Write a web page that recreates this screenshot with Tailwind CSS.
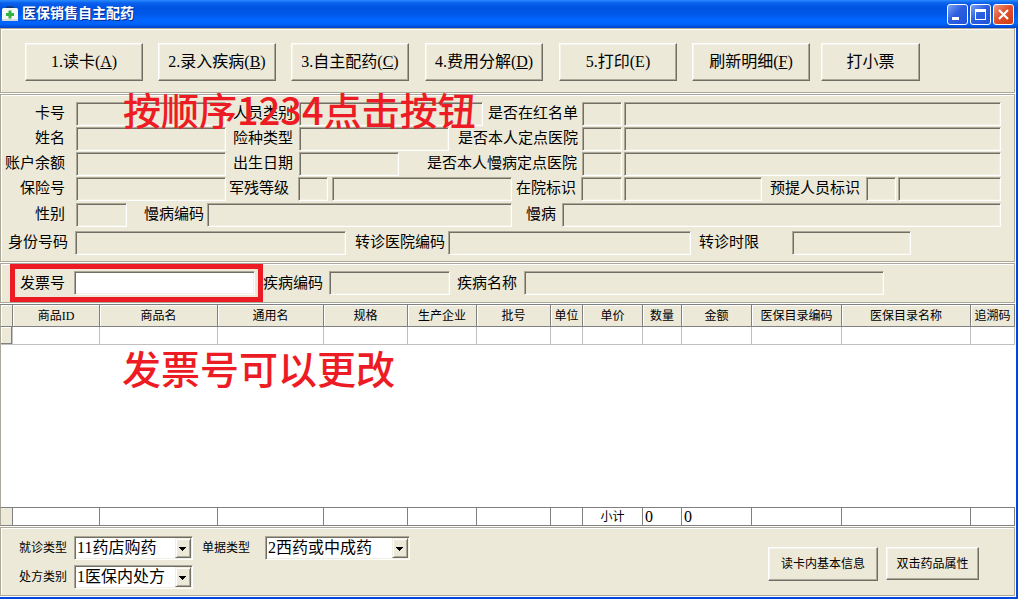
<!DOCTYPE html>
<html lang="zh-CN">
<head>
  <meta charset="UTF-8" />
  <meta name="viewport" content="width=device-width, initial-scale=1.0"/>
  <title>医保销售自主配药</title>
  <script src="https://cdn.jsdelivr.net/npm/@tailwindcss/browser@4"></script>
</head>
<body class="h-screen min-h-[480px] flex flex-col overflow-hidden bg-[#0046e0] text-black font-['Liberation_Serif','Noto_Sans_CJK_SC',serif]">

  <!-- Title bar -->
  <header class="h-7 shrink-0 flex items-center pl-[2px] pr-1 bg-[linear-gradient(#2a8cff_0px,#0a60ee_3px,#0053e1_8px,#0058ea_14px,#0066ff_20px,#0064fb_24px,#0040c8_28px)]">
    <svg class="w-4 h-4" viewBox="0 0 16 16">
      <path d="M5 2.500V1h6v1.500" fill="none" stroke="#222" stroke-width="1"/>
      <rect x="0" y="2" width="16" height="13" rx="1.500" fill="#f4f6f4"/>
      <rect x="0" y="13" width="16" height="2" rx="1" fill="#d5d9dc"/>
      <path d="M6.500 4.500h3V7h2.500v3H9.500v2.500h-3V10H4V7h2.500z" fill="#2fb344"/>
    </svg>
    <h1 class="ml-1 text-sm font-bold text-white [text-shadow:1px_1px_0_#0b2a8c]">医保销售自主配药</h1>
    <div class="ml-auto flex gap-[2px] [&>button]:w-[21px] [&>button]:h-[21px] [&>button]:border [&>button]:border-white [&>button]:rounded-[3px]">
      <button aria-label="最小化" class="bg-[linear-gradient(135deg,#7aa2f5,#2c5fe0_45%,#1f52d8)]">
        <svg viewBox="0 0 19 19"><path d="M4 12h7v3H4z" fill="#fff"/></svg>
      </button>
      <button aria-label="最大化" class="bg-[linear-gradient(135deg,#7aa2f5,#2c5fe0_45%,#1f52d8)]">
        <svg viewBox="0 0 19 19"><path d="M4 4h11v11H4zM5 7v7h9V7z" fill="#fff" fill-rule="evenodd"/></svg>
      </button>
      <button aria-label="关闭" class="bg-[linear-gradient(135deg,#f0997f,#e0512d_45%,#cf3c12)]">
        <svg viewBox="0 0 19 19"><path d="M5 5l9 9M14 5l-9 9" stroke="#fff" stroke-width="2.200"/></svg>
      </button>
    </div>
  </header>

  <main class="flex-1 min-h-0 mr-[2px] mb-[2px] pr-px pb-px bg-white flex flex-col gap-px
    [&>section]:bg-[#ece9d8] [&>section]:border [&>section]:border-[#aca899] [&>section]:shadow-[inset_1px_1px_#fff]
    [&_section_button]:border [&_section_button]:border-t-white [&_section_button]:border-l-white [&_section_button]:border-r-[#716f64] [&_section_button]:border-b-[#716f64] [&_section_button]:shadow-[inset_-1px_-1px_#aca899,inset_1px_1px_#f6f4ea]
    [&_input]:h-6 [&_input]:px-1 [&_input]:min-w-0 [&_input]:border [&_input]:border-t-[#aca899] [&_input]:border-l-[#aca899] [&_input]:border-r-white [&_input]:border-b-white [&_input]:shadow-[inset_1px_1px_#716f64,inset_-1px_-1px_#f1efe2]
    [&_label]:whitespace-nowrap">

    <!-- Step buttons -->
    <section class="shrink-0 h-[65px] flex items-end pl-6 pb-[11px] text-base [&>button]:w-[118px] [&>button]:h-[38px] [&>button]:whitespace-nowrap">
      <button>1.读卡(<u>A</u>)</button>
      <button class="ml-[15px]">2.录入疾病(<u>B</u>)</button>
      <button class="ml-[15px]">3.自主配药(<u>C</u>)</button>
      <button class="ml-4">4.费用分解(<u>D</u>)</button>
      <button class="ml-4">5.打印(E)</button>
      <button class="ml-[15px]">刷新明细(<u>F</u>)</button>
      <button class="ml-[11px] max-w-[99px]">打小票</button>
    </section>

    <!-- Card holder -->
    <section class="relative shrink-0 h-[168px] flex flex-col gap-px pt-[7px] pr-[13px] text-[15px] leading-[22px] [&>div]:flex [&>div]:h-6 [&_label]:shrink-0 [&_label]:text-right">
      <div>
        <label for="cardNo" class="w-16 mr-[11px]">卡号</label>
        <input id="cardNo" class="w-[150px]" />
        <label for="personType" class="ml-[7px] mr-[6px]">人员类别</label>
        <input id="personType" class="w-[184px]" />
        <label for="redList" class="w-[95px] mr-1">是否在红名单</label>
        <input id="redList" class="w-10" />
        <input aria-label="红名单说明" class="flex-1 ml-[2px]" />
      </div>
      <div>
        <label for="fullName" class="w-16 mr-[11px]">姓名</label>
        <input id="fullName" class="w-[150px]" />
        <label for="insType" class="ml-[7px] mr-[6px]">险种类型</label>
        <input id="insType" class="w-[150px]" />
        <label for="hospital" class="w-[129px] mr-1">是否本人定点医院</label>
        <input id="hospital" class="w-10" />
        <input aria-label="定点医院说明" class="flex-1 ml-[2px]" />
      </div>
      <div>
        <label for="balance" class="w-16 mr-[11px]">账户余额</label>
        <input id="balance" class="w-[150px]" />
        <label for="birthday" class="ml-[7px] mr-[6px]">出生日期</label>
        <input id="birthday" class="w-[100px]" />
        <label for="chronicHospital" class="w-[178px] mr-[5px]">是否本人慢病定点医院</label>
        <input id="chronicHospital" class="w-10" />
        <input aria-label="慢病定点医院说明" class="flex-1 ml-[2px]" />
      </div>
      <div>
        <label for="insNo" class="w-16 mr-[11px]">保险号</label>
        <input id="insNo" class="w-[150px]" />
        <label for="disability" class="ml-[3px] mr-[9px]">军残等级</label>
        <input id="disability" class="w-[30px]" />
        <input aria-label="军残等级说明" class="ml-1 w-[180px]" />
        <label for="inHospital" class="w-16 mr-[5px]">在院标识</label>
        <input id="inHospital" class="w-[41px]" />
        <input aria-label="在院标识说明" class="ml-[2px] w-[138px]" />
        <label for="advance" class="ml-2 mr-[6px]">预提人员标识</label>
        <input id="advance" class="w-[30px]" />
        <input aria-label="预提人员标识说明" class="flex-1 ml-[2px]" />
      </div>
      <div class="mt-px">
        <label for="gender" class="w-16 mr-[11px]">性别</label>
        <input id="gender" class="w-[51px]" />
        <label for="chronicCode" class="ml-[17px] mr-[3px]">慢病编码</label>
        <input id="chronicCode" class="w-[305px]" />
        <label for="chronic" class="ml-[14px] mr-[6px]">慢病</label>
        <input id="chronic" class="flex-1" />
      </div>
      <div class="mt-[3px]">
        <label for="idNo" class="w-[67px] mr-[7px]">身份号码</label>
        <input id="idNo" class="w-[271px]" />
        <label for="transferCode" class="ml-[9px] mr-[3px]">转诊医院编码</label>
        <input id="transferCode" class="w-[243px]" />
        <label for="transferLimit" class="ml-2 mr-[33px]">转诊时限</label>
        <input id="transferLimit" class="w-[119px]" />
      </div>
      <p class="absolute left-[122px] top-0 pointer-events-none whitespace-nowrap text-[38px] leading-[28px] font-medium text-[#ed1c24] font-['Noto_Sans_CJK_SC',sans-serif]">按顺序1234点击按钮</p>
    </section>

    <!-- Invoice -->
    <section class="shrink-0 h-10 flex items-center pl-[9px] text-[15px] leading-[22px]">
      <div class="self-stretch flex items-center border-[5px] border-[#ed1c24] pl-[5px] pr-[3px]">
        <label for="invoiceNo" class="mr-[9px]">发票号</label>
        <input id="invoiceNo" class="w-[181px] bg-white" />
      </div>
      <label for="diseaseCode" class="mr-[6px]">疾病编码</label>
      <input id="diseaseCode" class="w-[121px]" />
      <label for="diseaseName" class="ml-[7px] mr-[7px]">疾病名称</label>
      <input id="diseaseName" class="flex-1 mr-[130px]" />
    </section>

    <!-- Goods -->
    <div class="relative flex-1 min-h-0">
      <table class="w-full h-full table-fixed border-separate border-spacing-0 border-t border-[#808080] text-xs leading-4
        [&_th]:font-normal [&_th]:p-0 [&_th]:h-[22px] [&_th]:whitespace-nowrap [&_th]:bg-[#ece9d8] [&_th]:border-r [&_th]:border-b [&_th]:border-[#808080] [&_th]:shadow-[inset_1px_1px_#fff]
        [&_td]:p-0 [&_tbody_td]:border-[#c0c0c0] [&_tfoot_td]:border-r [&_tfoot_td]:border-y [&_tfoot_td]:border-[#808080] [&_tfoot_td]:h-[19px]
        [&_tr>:first-child]:border-l [&_tr>:first-child]:border-l-[#aca899]">
        <colgroup>
          <col class="w-[13px]"><col class="w-[87px]"><col class="w-[118px]"><col class="w-[106px]"><col class="w-[84px]"><col class="w-[69px]"><col class="w-[74px]">
          <col class="w-[32px]"><col class="w-[60px]"><col class="w-[39px]"><col class="w-[70px]"><col class="w-[90px]"><col class="w-[129px]"><col class="w-[44px]">
        </colgroup>
        <thead>
          <tr>
            <th></th><th>商品ID</th><th>商品名</th><th>通用名</th><th>规格</th><th>生产企业</th><th>批号</th>
            <th>单位</th><th>单价</th><th>数量</th><th>金额</th><th>医保目录编码</th><th>医保目录名称</th><th>追溯码</th>
          </tr>
        </thead>
        <tbody>
          <tr class="h-[18px] [&>td]:border-r [&>td]:border-b">
            <td class="bg-[#ece9d8] shadow-[inset_-1px_-1px_#808080,inset_1px_1px_#fff]"></td><td></td><td></td><td></td><td></td><td></td><td></td>
            <td></td><td></td><td></td><td></td><td></td><td></td><td></td>
          </tr>
          <tr class="h-full"><td colspan="14"></td></tr>
        </tbody>
        <tfoot>
          <tr>
            <td class="bg-[#ece9d8]"></td><td></td><td></td><td></td><td></td><td></td><td></td>
            <td></td><td class="text-center">小计</td><td class="text-base leading-4 align-bottom"><span class="ml-[2px]">0</span></td><td class="text-base leading-4 align-bottom"><span class="ml-[2px]">0</span></td><td></td><td></td><td></td>
          </tr>
        </tfoot>
      </table>
      <p class="absolute left-[122px] top-[43px] pointer-events-none whitespace-nowrap text-[39px] leading-[40px] font-medium text-[#ed1c24] font-['Noto_Sans_CJK_SC',sans-serif]">发票号可以更改</p>
    </div>

    <!-- Receipt options -->
    <section class="shrink-0 h-[69px] flex items-start pt-2 pl-[18px] pr-[35px] text-xs
      [&_select]:appearance-none [&_select]:w-full [&_select]:h-6 [&_select]:pl-[2px] [&_select]:bg-white [&_select]:text-base [&_select]:leading-5 [&_select]:border [&_select]:border-t-[#aca899] [&_select]:border-l-[#aca899] [&_select]:border-r-white [&_select]:border-b-white [&_select]:shadow-[inset_1px_1px_#716f64,inset_-1px_-1px_#f1efe2]
      [&_i]:absolute [&_i]:right-[2px] [&_i]:top-[2px] [&_i]:w-4 [&_i]:h-5 [&_i]:pointer-events-none [&_i]:bg-[#ece9d8] [&_i]:border [&_i]:border-t-[#f1efe2] [&_i]:border-l-[#f1efe2] [&_i]:border-r-[#716f64] [&_i]:border-b-[#716f64] [&_i]:shadow-[inset_1px_1px_#fff,inset_-1px_-1px_#aca899]">
      <div class="grid grid-cols-[48px_119px] gap-x-[7px] gap-y-[5px] items-center">
        <label for="visitType">就诊类型</label>
        <div class="relative">
          <select id="visitType"><option>11药店购药</option></select>
          <i><svg viewBox="0 0 14 18"><path d="M3 8h7v1H3zM4 9h5v1H4zM5 10h3v1H5zM6 11h1v1H6z"/></svg></i>
        </div>
        <label for="rxType">处方类别</label>
        <div class="relative">
          <select id="rxType"><option>1医保内处方</option></select>
          <i><svg viewBox="0 0 14 18"><path d="M3 8h7v1H3zM4 9h5v1H4zM5 10h3v1H5zM6 11h1v1H6z"/></svg></i>
        </div>
      </div>
      <label for="billType" class="ml-[9px] mr-[15px] leading-6">单据类型</label>
      <div class="relative w-[145px]">
        <select id="billType"><option>2西药或中成药</option></select>
        <i><svg viewBox="0 0 14 18"><path d="M3 8h7v1H3zM4 9h5v1H4zM5 10h3v1H5zM6 11h1v1H6z"/></svg></i>
      </div>
      <button class="ml-auto mt-[11px] w-[110px] h-[34px]">读卡内基本信息</button>
      <button class="ml-2 mt-[11px] w-[93px] h-[33px]">双击药品属性</button>
    </section>
  </main>
</body>
</html>
